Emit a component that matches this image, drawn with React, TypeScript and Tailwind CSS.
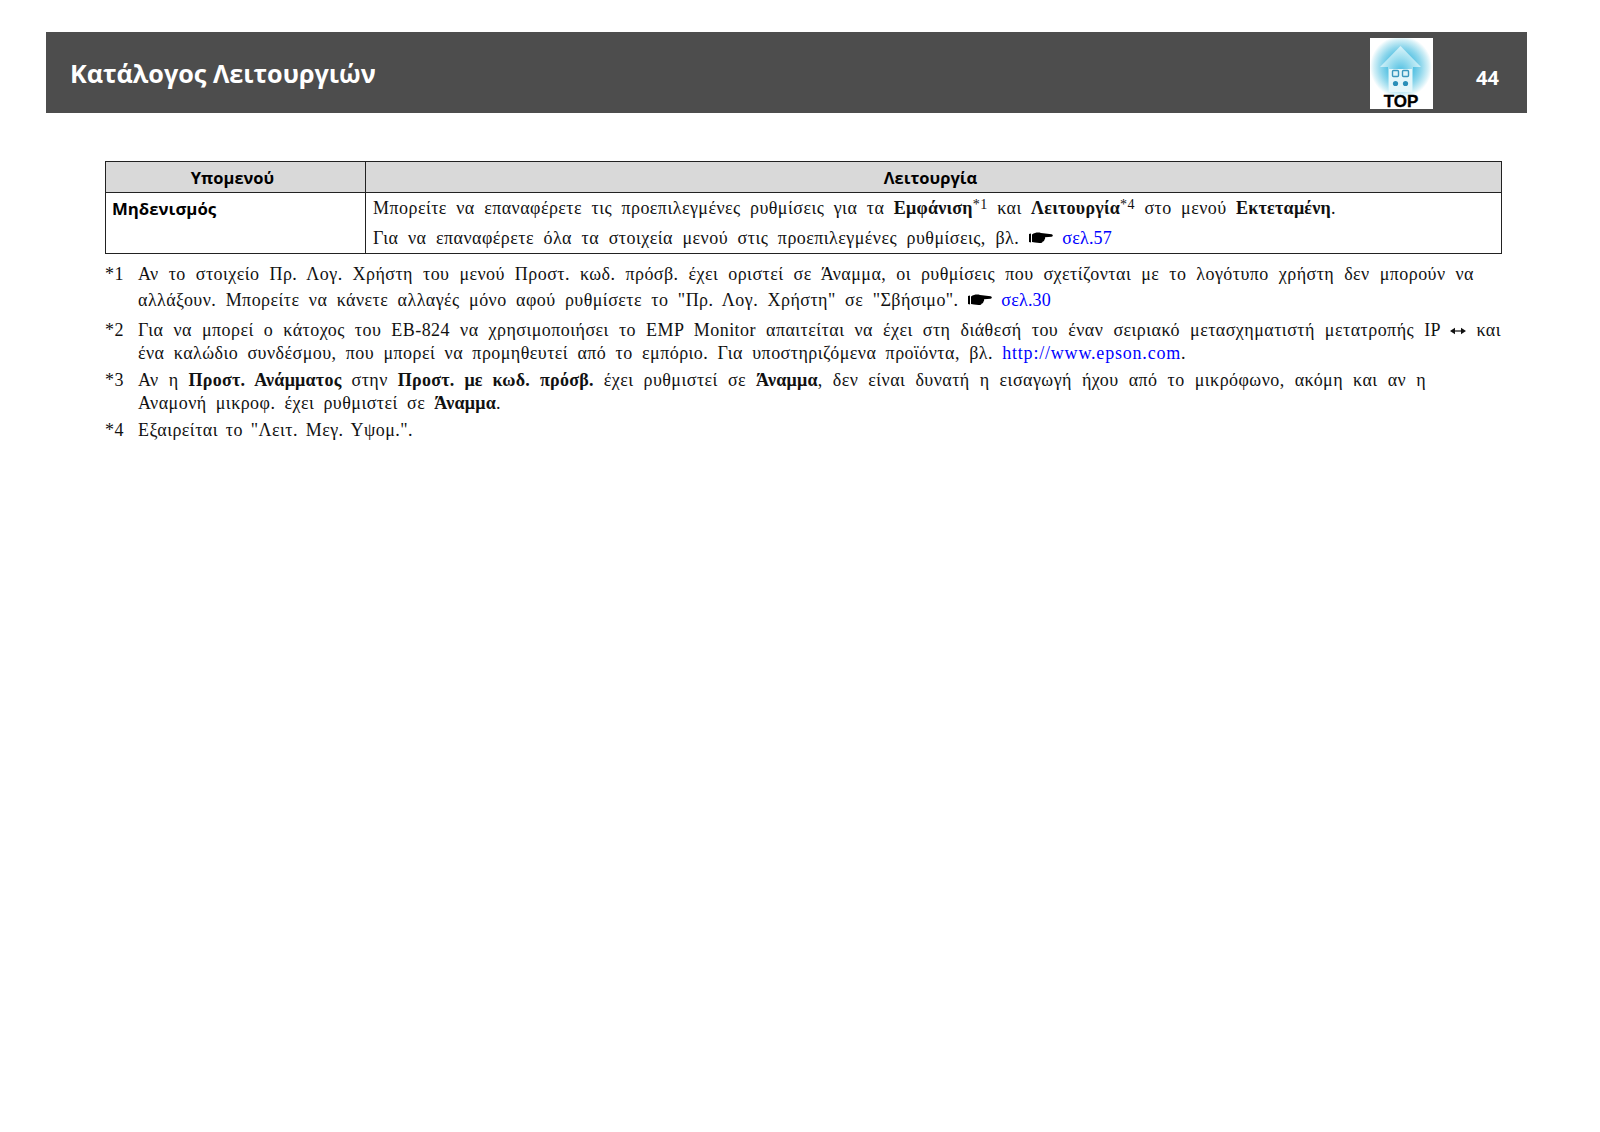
const Hand = () => (
  <svg width="24" height="12" viewBox="0 0 24 12" className="inline-block align-[0px]">
    <path d="M0 2 L2 1.6 V10.4 L0 10 Z" fill="#000" />
    <path d="M3 2.4 C6 0.6 9 0.2 12 1 L22.6 2.2 C24.2 2.6 24.2 4.6 22.6 4.8 L16 5.2 C16.4 6.2 16 7.4 15.4 7.8 C15.4 9 14.4 9.6 13.8 9.6 C13.2 11 11.8 11.2 10.6 11 L6 10.6 L3 10 Z" fill="#000" />
  </svg>
);

const Arrow = () => (
  <svg width="16" height="8" viewBox="0 0 16 8" className="inline-block align-[1px]">
    <path d="M0 4 L5 0.8 V7.2 Z M16 4 L11 0.8 V7.2 Z" fill="#111" />
    <rect x="4" y="3.4" width="8" height="1.2" fill="#111" />
  </svg>
);

const Sup = ({ children }: { children: string }) => (
  <span className="text-[14px] leading-none [vertical-align:5px]">{children}</span>
);

const Bold = ({ children }: { children: string }) => (
  <b className="tracking-[0.25px]">{children}</b>
);

const Link = ({ children }: { children: string }) => (
  <span className="tracking-[0.2px] text-[#0000ff]">{children}</span>
);

const TopIcon = () => (
  <svg width="63" height="71" viewBox="0 0 63 71" className="block">
    <defs>
      <radialGradient id="glow" cx="50%" cy="50%" r="50%">
        <stop offset="0%" stopColor="#08a4d8" />
        <stop offset="30%" stopColor="#3db8df" />
        <stop offset="65%" stopColor="#8fd7ec" />
        <stop offset="88%" stopColor="#d4f0f7" />
        <stop offset="100%" stopColor="#ffffff" />
      </radialGradient>
      <radialGradient id="house" cx="50%" cy="55%" r="60%">
        <stop offset="0%" stopColor="#4fbfe2" />
        <stop offset="55%" stopColor="#a8e2f1" />
        <stop offset="100%" stopColor="#e9f8fc" />
      </radialGradient>
    </defs>
    <rect width="63" height="71" fill="#fff" />
    <circle cx="31" cy="29" r="31" fill="url(#glow)" />
    <path d="M30.5 8 L51 29 H43 V54 H18 V29 H10 Z" fill="url(#house)" />
    <rect x="19" y="31" width="23" height="23" fill="#e4f6fa" />
    <g fill="#dff4f9" stroke="#3a97bd" strokeWidth="1.4">
      <rect x="22.5" y="32.5" width="6" height="6" rx="1" />
      <rect x="32.5" y="32.5" width="6" height="6" rx="1" />
    </g>
    <g fill="#2b8fb8">
      <circle cx="25.5" cy="45.5" r="2.6" />
      <circle cx="35.5" cy="45.5" r="2.6" />
    </g>
    <text x="31" y="68.5" textAnchor="middle" fontFamily="Liberation Sans" fontWeight="700" fontSize="17" fill="#000" stroke="#000" strokeWidth="0.3">TOP</text>
  </svg>
);

// every line of the manual is justified to its own width, like the PDF it came from
const Line = ({ w, h, children }: { w: string; h: string; children: React.ReactNode }) => (
  <div className={`${w} ${h} text-justify [text-align-last:justify]`}>{children}</div>
);

export default function App() {
  return (
    <div className="min-h-[1132px] bg-white pt-8 font-['Liberation_Serif',serif] text-[18px] tracking-[0.45px] text-[#111]">
      <div className="ml-[46px] flex h-[81px] w-[1481px] justify-between bg-[#4d4d4d] tracking-normal">
        <h1 className="ml-[24px] mt-[23px] font-['Open_Sans',sans-serif] text-[25.2px] font-bold text-white">Κατάλογος Λειτουργιών</h1>
        <div className="flex items-start">
          <div className="mt-[6px]"><TopIcon /></div>
          <div className="mt-[31px] ml-[43px] mr-[27px] w-[24px] font-['Open_Sans',sans-serif] text-[20px] font-bold text-white">44</div>
        </div>
      </div>

      <div className="ml-[105px] mt-[48px] w-[1397px] border border-[#222]">
        <div className="flex h-[31px] border-b border-[#222] bg-[#d9d9d9] pt-[2px] font-['Open_Sans',sans-serif] text-[16.5px] font-bold tracking-normal text-black">
          <div className="-mt-[2px] flex w-[260px] items-center justify-center border-r border-[#222] pr-[6px]"><span className="mt-[2px]">Υπομενού</span></div>
          <div className="flex flex-1 items-center justify-center pr-[6px]">Λειτουργία</div>
        </div>
        <div className="flex h-[60px]">
          <div className="w-[260px] border-r border-[#222] pl-[6px] pt-[3px] font-['Open_Sans',sans-serif] text-[16.8px] font-bold tracking-normal text-black">Μηδενισμός</div>
          <div className="flex-1 pl-[7px] pt-[2px]">
            <Line w="w-[963px]" h="h-[30px]">
              Μπορείτε να επαναφέρετε τις προεπιλεγμένες ρυθμίσεις για τα <Bold>Εμφάνιση</Bold><Sup>*1</Sup> και <Bold>Λειτουργία</Bold><Sup>*4</Sup> στο μενού <Bold>Εκτεταμένη</Bold>.
            </Line>
            <Line w="w-[739px]" h="h-[28px]">
              Για να επαναφέρετε όλα τα στοιχεία μενού στις προεπιλεγμένες ρυθμίσεις, βλ. <Hand /> <Link>σελ.57</Link>
            </Line>
          </div>
        </div>
      </div>

      <div className="ml-[105px] mt-[7px] w-[1398px]">
        <div className="flex">
          <div className="w-[33px] shrink-0">*1</div>
          <div>
            <Line w="w-[1336px]" h="h-[26px]">Αν το στοιχείο Πρ. Λογ. Χρήστη του μενού Προστ. κωδ. πρόσβ. έχει οριστεί σε Άναμμα, οι ρυθμίσεις που σχετίζονται με το λογότυπο χρήστη δεν μπορούν να</Line>
            <Line w="w-[913px]" h="h-[30px]">αλλάξουν. Μπορείτε να κάνετε αλλαγές μόνο αφού ρυθμίσετε το "Πρ. Λογ. Χρήστη" σε "Σβήσιμο". <Hand /> <Link>σελ.30</Link></Line>
          </div>
        </div>
        <div className="flex">
          <div className="w-[33px] shrink-0">*2</div>
          <div>
            <Line w="w-[1363px]" h="h-[23px]">Για να μπορεί ο κάτοχος του EB-824 να χρησιμοποιήσει το EMP Monitor απαιτείται να έχει στη διάθεσή του έναν σειριακό μετασχηματιστή μετατροπής IP <Arrow /> και</Line>
            <Line w="w-[1048px]" h="h-[27px]">ένα καλώδιο συνδέσμου, που μπορεί να προμηθευτεί από το εμπόριο. Για υποστηριζόμενα προϊόντα, βλ. <span className="tracking-[0.8px] text-[#0000ff]">http://www.epson.com</span>.</Line>
          </div>
        </div>
        <div className="flex">
          <div className="w-[33px] shrink-0">*3</div>
          <div>
            <Line w="w-[1288px]" h="h-[23px]">Αν η <Bold>Προστ. Ανάμματος</Bold> στην <Bold>Προστ. με κωδ. πρόσβ.</Bold> έχει ρυθμιστεί σε <Bold>Άναμμα</Bold>, δεν είναι δυνατή η εισαγωγή ήχου από το μικρόφωνο, ακόμη και αν η</Line>
            <Line w="w-[363px]" h="h-[27px]">Αναμονή μικροφ. έχει ρυθμιστεί σε <Bold>Άναμμα</Bold>.</Line>
          </div>
        </div>
        <div className="flex">
          <div className="w-[33px] shrink-0">*4</div>
          <Line w="w-[275px]" h="h-[27px]">Εξαιρείται το "Λειτ. Μεγ. Υψομ.".</Line>
        </div>
      </div>
    </div>
  );
}
